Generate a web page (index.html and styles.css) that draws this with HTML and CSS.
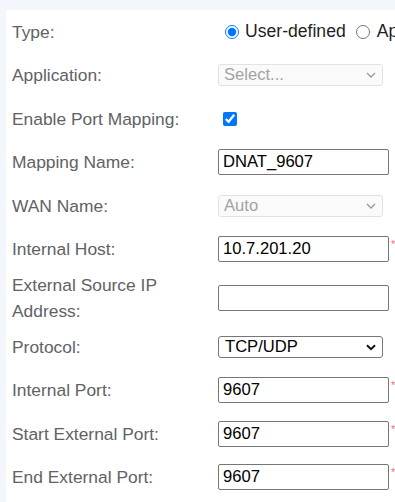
FILE: index.html
```html
<!DOCTYPE html>
<html>
<head>
<meta charset="utf-8">
<link rel="stylesheet" href="styles.css">
</head>
<body>
<div class="panel">
  <div class="form">
    <div class="row">
      <div class="label">Type:</div>
      <div class="ctrl radios">
        <label class="radio"><input type="radio" name="type" checked><span>User-defined</span></label>
        <label class="radio"><input type="radio" name="type"><span>Application</span></label>
      </div>
    </div>
    <div class="row">
      <div class="label">Application:</div>
      <div class="ctrl">
        <div class="sel disabled">
          <span class="sel-text">Select...</span>
          <svg class="chev" width="10" height="6" viewBox="0 0 10 6"><path d="M1 1 L5 5 L9 1" fill="none" stroke="#9a9a9a" stroke-width="1.3"/></svg>
        </div>
      </div>
    </div>
    <div class="row">
      <div class="label">Enable Port Mapping:</div>
      <div class="ctrl"><input class="check" type="checkbox" checked></div>
    </div>
    <div class="row">
      <div class="label">Mapping Name:</div>
      <div class="ctrl"><input class="text" type="text" value="DNAT_9607"></div>
    </div>
    <div class="row">
      <div class="label">WAN Name:</div>
      <div class="ctrl">
        <div class="sel disabled">
          <span class="sel-text">Auto</span>
          <svg class="chev" width="10" height="6" viewBox="0 0 10 6"><path d="M1 1 L5 5 L9 1" fill="none" stroke="#9a9a9a" stroke-width="1.3"/></svg>
        </div>
      </div>
    </div>
    <div class="row">
      <div class="label">Internal Host:</div>
      <div class="ctrl"><input class="text" type="text" value="10.7.201.20"><span class="req">*</span></div>
    </div>
    <div class="row tall">
      <div class="label">External Source IP Address:</div>
      <div class="ctrl"><input class="text" type="text" value=""></div>
    </div>
    <div class="row">
      <div class="label">Protocol:</div>
      <div class="ctrl">
        <div class="sel">
          <span class="sel-text dark">TCP/UDP</span>
          <svg class="chev" width="10" height="7" viewBox="0 0 10 7"><path d="M1 1.2 L5 5.2 L9 1.2" fill="none" stroke="#111" stroke-width="2"/></svg>
        </div>
      </div>
    </div>
    <div class="row">
      <div class="label">Internal Port:</div>
      <div class="ctrl"><input class="text" type="text" value="9607"><span class="req">*</span></div>
    </div>
    <div class="row">
      <div class="label">Start External Port:</div>
      <div class="ctrl"><input class="text" type="text" value="9607"><span class="req">*</span></div>
    </div>
    <div class="row">
      <div class="label">End External Port:</div>
      <div class="ctrl"><input class="text" type="text" value="9607"><span class="req">*</span></div>
    </div>
  </div>
</div>
</body>
</html>
```
FILE: styles.css
```css
html, body {
  margin: 0;
  padding: 0;
}
body {
  background: #f3f6fa;
  width: 395px;
  height: 502px;
  overflow: hidden;
  font-family: "Liberation Sans", Arial, sans-serif;
}
.panel {
  margin: 10px 0 0 6px;
  width: 389px;
  height: 492px;
  overflow: hidden;
  background: #ffffff;
}
.form {
  display: flex;
  flex-direction: column;
}
.row {
  display: grid;
  grid-template-columns: 212px 1fr;
  height: 43.5px;
  align-items: center;
}
.row.tall {
  height: 54px;
}
.label {
  padding-left: 6px;
  font-size: 17.4px;
  line-height: 26px;
  color: #606266;
  width: 175px;
}
.ctrl {
  display: flex;
  align-items: flex-start;
}
.radios {
  align-items: center;
  font-size: 17.6px;
  color: #1f1f1f;
  white-space: nowrap;
}
.radio {
  display: flex;
  align-items: center;
}
.radio input {
  width: 14px;
  height: 14px;
  margin: 0 6px 0 7px;
  accent-color: #0075ff;
}
.radio + .radio input {
  margin-left: 10px;
}
.radio + .radio span {
  margin-left: 1px;
}
.check {
  width: 14px;
  height: 14px;
  margin: 0 0 0 5px;
  accent-color: #0075ff;
}
.text {
  box-sizing: border-box;
  width: 171px;
  height: 26px;
  margin: 0;
  padding: 0 4px;
  border: 1px solid #767676;
  border-radius: 2px;
  font-family: "Liberation Sans", Arial, sans-serif;
  font-size: 16.6px;
  color: #000;
  background: #fff;
  outline: none;
}
.req {
  color: #f56c6c;
  font-size: 11px;
  line-height: 1;
  margin: 3px 0 0 2px;
}
.sel {
  position: relative;
  box-sizing: border-box;
  width: 165px;
  height: 22px;
  border: 1px solid #767676;
  border-radius: 3px;
  background: #fff;
  display: flex;
  align-items: center;
}
.sel.disabled {
  border-color: #e2e2e2;
  background: #fafafa;
}
.sel-text {
  padding-left: 5px;
  font-size: 16.6px;
  color: #a3a3a3;
  line-height: 20px;
}
.sel-text.dark {
  padding-left: 6px;
  color: #000;
}
.chev {
  position: absolute;
  right: 6px;
  top: 7px;
}
```
